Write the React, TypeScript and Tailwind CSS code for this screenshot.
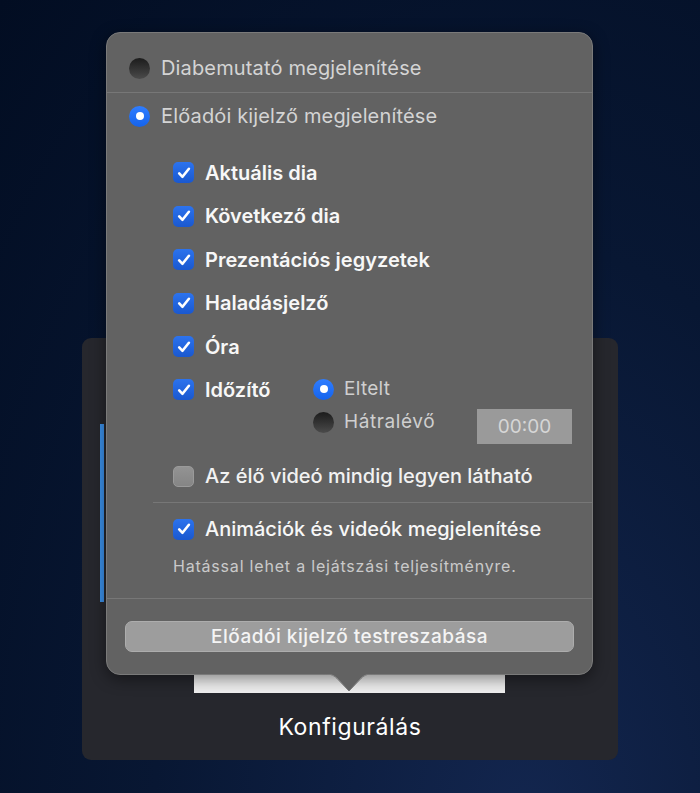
import React from 'react';

// ---------------------------------------------------------------------------
// Small controls
// ---------------------------------------------------------------------------

function Radio({ on }: { on?: boolean }) {
  if (on) {
    return (
      <span className="flex h-[21px] w-[21px] shrink-0 items-center justify-center rounded-full bg-gradient-to-b from-[#2f7dff] to-[#1463ec]">
        <span className="h-[8px] w-[8px] rounded-full bg-white" />
      </span>
    );
  }
  return (
    <span className="h-[21px] w-[21px] shrink-0 rounded-full bg-gradient-to-b from-[#1c1c1c] to-[#4b4b4b]" />
  );
}

function Checkbox({ checked }: { checked?: boolean }) {
  if (!checked) {
    return (
      <span className="h-[21px] w-[21px] shrink-0 rounded-[5px] border border-[#9a9a9a] bg-gradient-to-b from-[#939393] to-[#858585]" />
    );
  }
  return (
    <span className="flex h-[21px] w-[21px] shrink-0 items-center justify-center rounded-[5px] bg-gradient-to-b from-[#2c73ee] to-[#1a58cf]">
      <svg width="14" height="14" viewBox="0 0 14 14" fill="none">
        <path
          d="M2.2 7.4 L5.5 10.8 L11.9 2.8"
          stroke="white"
          strokeWidth="2.6"
          strokeLinecap="round"
          strokeLinejoin="round"
        />
      </svg>
    </span>
  );
}

function CheckRow({ label, checked = true }: { label: string; checked?: boolean }) {
  return (
    <div className="flex h-[43.4px] items-center gap-[11px]">
      <Checkbox checked={checked} />
      <span className="text-[20px] font-semibold leading-[24px] text-[#f7f7f7]">{label}</span>
    </div>
  );
}

// ---------------------------------------------------------------------------
// App
// ---------------------------------------------------------------------------

export default function App() {
  return (
    <div
      className="relative h-[793px] w-[700px] overflow-hidden bg-[radial-gradient(ellipse_at_75%_105%,#13264f_0%,#081733_50%,#020d22_100%)]"
      style={{ fontFamily: 'Inter, "Noto Sans", sans-serif' }}
    >
      {/* back panel */}
      <div className="ml-[82px] mt-[338px] flex h-[422px] w-[536px] flex-col rounded-[9px] bg-[#26272d]">
        <div className="flex h-[355px] items-start">
          <div className="ml-[18px] mt-[86px] h-[178px] w-[4px] bg-[#3a8ee6]" />
          <div className="ml-[90px] h-[120px] w-[311px] self-end bg-[#efefef]" />
        </div>
        <div className="mt-[20px] text-center text-[23px] leading-[28px] tracking-[0.6px] text-white">
          Konfigurálás
        </div>
      </div>

      {/* popover */}
      <div className="absolute left-[106px] top-[32px] w-[487px] rounded-[14px] border border-[#7a7a7a] bg-[#626262] shadow-[0_4px_16px_rgba(0,0,0,0.45)]">
        <div className="flex items-center gap-[11px] pb-[12px] pl-[22px] pt-[23px]">
          <Radio />
          <span className="text-[20px] leading-[24px] tracking-[0.15px] text-[#d4d4d4]">Diabemutató megjelenítése</span>
        </div>
        <div className="h-px bg-[#777777]" />
        <div className="flex items-center gap-[11px] pl-[22px] pt-[11px]">
          <Radio on />
          <span className="text-[20px] leading-[24px] tracking-[0.15px] text-[#d4d4d4]">Előadói kijelző megjelenítése</span>
        </div>

        <div className="mt-[23.3px] flex flex-col pl-[66px] pr-[20px]">
          <CheckRow label="Aktuális dia" />
          <CheckRow label="Következő dia" />
          <CheckRow label="Prezentációs jegyzetek" />
          <CheckRow label="Haladásjelző" />
          <CheckRow label="Óra" />

          <div className="flex items-start">
            <div className="w-[140px]">
              <CheckRow label="Időzítő" />
            </div>
            <div className="flex flex-col gap-[9px] pt-[9px]">
              <div className="flex items-center gap-[10px]">
                <Radio on />
                <span className="text-[19px] leading-[24px] tracking-[0.3px] text-[#cfcfcf]">Eltelt</span>
              </div>
              <div className="flex items-center gap-[10px]">
                <Radio />
                <span className="text-[19px] leading-[24px] tracking-[0.6px] text-[#cfcfcf]">Hátralévő</span>
              </div>
            </div>
            <div className="ml-auto mt-[41px] flex h-[35px] w-[95px] items-center justify-center bg-[#9a9a9a] text-[19px] text-[#d6d6d6]">
              00:00
            </div>
          </div>

          <div className="mt-[20px] flex h-[24px] items-center gap-[11px]">
            <Checkbox />
            <span className="text-[20px] font-medium leading-[24px] text-[#f2f2f2]">
              Az élő videó mindig legyen látható
            </span>
          </div>
        </div>

        <div className="ml-[46px] mt-[14px] h-px bg-[#777777]" />

        <div className="mt-[14px] flex h-[24px] items-center gap-[11px] pl-[66px]">
          <Checkbox checked />
          <span className="text-[20px] font-medium leading-[24px] text-[#f7f7f7]">
            Animációk és videók megjelenítése
          </span>
        </div>
        <div className="mt-[15px] pl-[66px] text-[16px] leading-[20px] tracking-[0.8px] text-[#cacaca]">
          Hatással lehet a lejátszási teljesítményre.
        </div>

        <div className="mt-[22px] h-px bg-[#777777]" />

        <div className="px-[18px] pb-[22px] pt-[22px]">
          <div className="flex h-[31px] items-center justify-center rounded-[7px] border border-[#adadad] bg-[#9d9d9d] text-[19px] font-medium tracking-[0.5px] text-[#f4f4f4]">
            Előadói kijelző testreszabása
          </div>
        </div>

        {/* arrow */}
        <svg
          className="absolute left-[214px] top-full -mt-px"
          width="56"
          height="19"
          viewBox="0 0 56 19"
        >
          <path d="M0 0 C8 0 12 1 16 5 L28 18 L40 5 C44 1 48 0 56 0 Z" fill="#626262" />
          <path d="M0 0.5 C8 0.5 12 1.5 16 5.5 L28 18 L40 5.5 C44 1.5 48 0.5 56 0.5" fill="none" stroke="#7a7a7a" strokeWidth="1" />
          <rect x="0" y="0" width="56" height="1" fill="#626262" />
        </svg>
      </div>
    </div>
  );
}
